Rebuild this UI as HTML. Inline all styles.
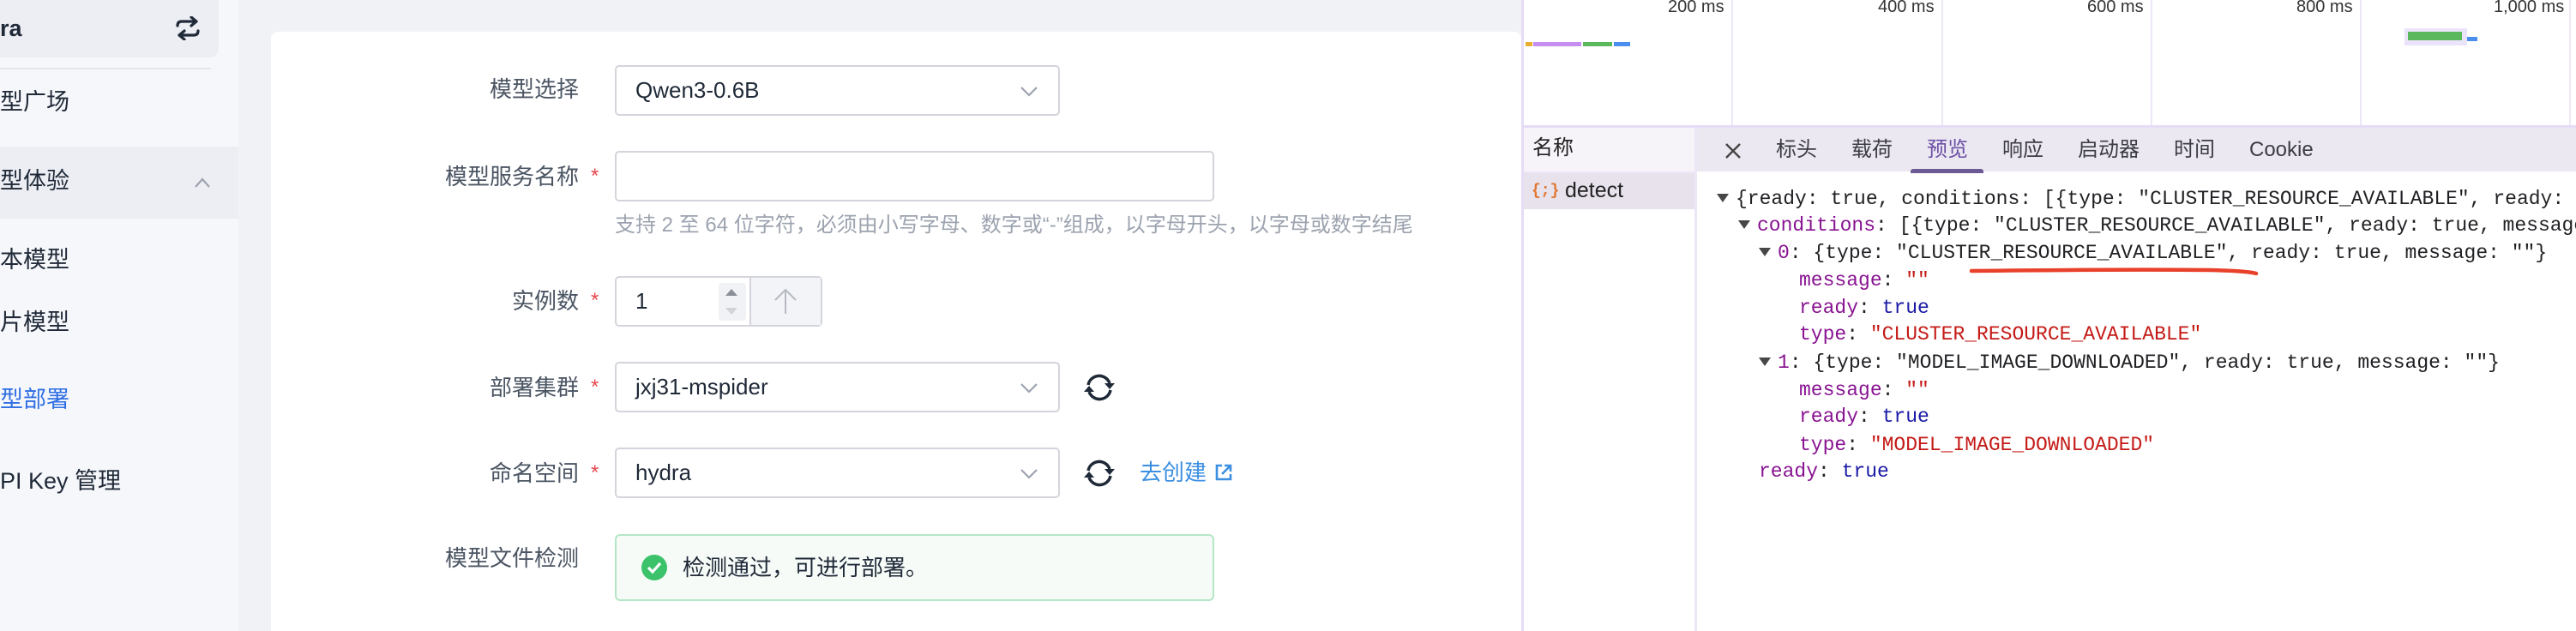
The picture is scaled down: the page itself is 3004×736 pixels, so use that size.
<!DOCTYPE html>
<html><head><meta charset="utf-8"><style>
*{margin:0;padding:0;box-sizing:border-box}
html,body{width:3004px;height:736px;overflow:hidden}
body{background:#f1f2f6;font-family:"Liberation Sans","Noto Sans CJK SC",sans-serif;position:relative;color:#1f2937}
.a{position:absolute}
.side{left:0;top:0;width:278px;height:736px;background:#f6f7fb}
.mi{position:absolute;left:0;font-size:27px;color:#1f2937;white-space:nowrap;line-height:36px}
.card{left:316px;top:37px;width:1458px;height:699px;background:#fff;border-radius:8px 8px 0 0}
.lbl{position:absolute;right:2329px;font-size:26px;color:#4b5563;line-height:36px;white-space:nowrap}
.star{position:absolute;left:689px;color:#e5484d;font-size:24px;line-height:36px}
.inp{position:absolute;left:717px;height:59px;border:2px solid #d4d4dc;border-radius:5px;background:#fff;font-size:26px;color:#1f2937;padding-left:22px;line-height:55px}
.chev{position:absolute;right:22px;top:16px}
.dt{left:1774px;top:0;width:1230px;height:736px;background:#fff;border-left:3px solid #e6dcf7;overflow:hidden}
.mono{font-family:"Liberation Mono","DejaVu Sans Mono",monospace;font-size:23px;white-space:nowrap;position:absolute;line-height:32px;color:#202124}
.k{color:#881391}.s{color:#c41a16}.b{color:#1a1aa6}
.tri{display:inline-block;width:0;height:0;border-left:7px solid transparent;border-right:7px solid transparent;border-top:10px solid #474747;margin-right:8px;vertical-align:2px}
.tab{position:absolute;top:160px;font-size:24px;color:#3c3c43;line-height:30px}
.ms{position:absolute;top:0;font-size:20px;color:#333;line-height:16px}
.gl{position:absolute;top:0;width:2px;height:147px;background:#ece6f6}
</style></head><body>
<div class="a side">
  <div class="a" style="left:0;top:0;width:255px;height:67px;background:#eceef4;border-radius:0 0 10px 0"></div>
  <div class="mi" style="top:15px;font-weight:bold">ra</div>
  <svg class="a" style="left:203px;top:19px" width="32" height="28" viewBox="0 0 32 28"><path d="M4 11 Q4 6 9 6 H26 M20 1 L26 6 L20 11 M28 17 Q28 22 23 22 H6 M12 27 L6 22 L12 17" fill="none" stroke="#1f2937" stroke-width="3.2" stroke-linecap="round" stroke-linejoin="round"/></svg>
  <div class="a" style="left:0;top:79px;width:246px;height:2px;background:#e4e6ec"></div>
  <div class="mi" style="top:101px">型广场</div>
  <div class="a" style="left:0;top:171px;width:278px;height:84px;background:#eceef4"></div>
  <div class="mi" style="top:193px">型体验</div>
  <svg class="a" style="left:226px;top:206px" width="20" height="14"><path d="M2 12 L10 3 L18 12" fill="none" stroke="#9ca3af" stroke-width="2.2"/></svg>
  <div class="mi" style="top:285px">本模型</div>
  <div class="mi" style="top:358px">片模型</div>
  <div class="mi" style="top:448px;color:#2f6fe4">型部署</div>
  <div class="mi" style="top:543px">PI Key 管理</div>
</div>
<div class="a card"></div>

<div class="lbl" style="top:86px">模型选择</div>
<div class="inp" style="top:76px;width:519px">Qwen3-0.6B<svg class="chev" width="24" height="24"><path d="M3 8 L12 17 L21 8" fill="none" stroke="#9ca3af" stroke-width="2.2"/></svg></div>

<div class="lbl" style="top:188px">模型服务名称</div><div class="star" style="top:188px">*</div>
<div class="inp" style="top:176px;width:699px"></div>
<div class="a" style="left:717px;top:247px;font-size:24px;color:#9ca3af;white-space:nowrap;line-height:32px">支持 2 至 64 位字符，必须由小写字母、数字或“-”组成，以字母开头，以字母或数字结尾</div>

<div class="lbl" style="top:333px">实例数</div><div class="star" style="top:333px">*</div>
<div class="inp" style="top:322px;width:242px;padding-left:0">
  <span style="position:absolute;left:22px;top:0">1</span>
  <div class="a" style="left:119px;top:6px;width:32px;height:44px;background:#f1f2f5;border-radius:4px"></div>
  <div class="a" style="left:127px;top:13px;border-left:7px solid transparent;border-right:7px solid transparent;border-bottom:8px solid #8b8f98"></div>
  <div class="a" style="left:127px;top:35px;border-left:7px solid transparent;border-right:7px solid transparent;border-top:8px solid #d1d3d8"></div>
  <div class="a" style="left:155px;top:0;width:83px;height:55px;background:#f3f4f7;border-left:2px solid #d4d4dc"></div>
  <svg class="a" style="left:183px;top:12px" width="28" height="32"><path d="M2 14 L14 2 L26 14 M14 2 V30" fill="none" stroke="#b6bac2" stroke-width="2"/></svg>
</div>

<div class="lbl" style="top:434px">部署集群</div><div class="star" style="top:434px">*</div>
<div class="inp" style="top:422px;width:519px">jxj31-mspider<svg class="chev" width="24" height="24"><path d="M3 8 L12 17 L21 8" fill="none" stroke="#9ca3af" stroke-width="2.2"/></svg></div>
<svg class="a" style="left:1263px;top:434px" width="38" height="36" viewBox="0 0 38 36"><path d="M6 15 A13 13 0 0 1 31 13 M32 21 A13 13 0 0 1 7 23" fill="none" stroke="#1f2937" stroke-width="3.5"/><path d="M25 13 L37 13 L31 20 Z M1 23 L13 23 L7 16 Z" fill="#1f2937"/></svg>

<div class="lbl" style="top:534px">命名空间</div><div class="star" style="top:534px">*</div>
<div class="inp" style="top:522px;width:519px">hydra<svg class="chev" width="24" height="24"><path d="M3 8 L12 17 L21 8" fill="none" stroke="#9ca3af" stroke-width="2.2"/></svg></div>
<svg class="a" style="left:1263px;top:534px" width="38" height="36" viewBox="0 0 38 36"><path d="M6 15 A13 13 0 0 1 31 13 M32 21 A13 13 0 0 1 7 23" fill="none" stroke="#1f2937" stroke-width="3.5"/><path d="M25 13 L37 13 L31 20 Z M1 23 L13 23 L7 16 Z" fill="#1f2937"/></svg>
<div class="a" style="left:1329px;top:533px;font-size:26px;color:#3b8fe0;line-height:36px">去创建</div>
<svg class="a" style="left:1416px;top:540px" width="22" height="22"><path d="M9 3 H3 V19 H19 V13 M12 3 H19 V10 M19 3 L9 13" fill="none" stroke="#3b8fe0" stroke-width="2.6"/></svg>

<div class="lbl" style="top:633px">模型文件检测</div>
<div class="a" style="left:717px;top:623px;width:699px;height:78px;background:#f6fbf8;border:2px solid #b5e6c6;border-radius:6px"></div>
<svg class="a" style="left:748px;top:647px" width="30" height="30"><circle cx="15" cy="15" r="15" fill="#3cc26a"/><path d="M8 15 L13 20 L22 10" fill="none" stroke="#fff" stroke-width="3.2"/></svg>
<div class="a" style="left:796px;top:644px;font-size:26px;color:#1f2937;line-height:36px">检测通过，可进行部署。</div>

<div class="a dt">
  <div class="gl" style="left:242px"></div><div class="gl" style="left:487px"></div><div class="gl" style="left:731px"></div><div class="gl" style="left:975px"></div><div class="gl" style="left:1219px"></div>
  <div class="ms" style="left:168px">200 ms</div><div class="ms" style="left:413px">400 ms</div><div class="ms" style="left:657px">600 ms</div><div class="ms" style="left:901px">800 ms</div><div class="ms" style="left:1131px">1,000 ms</div>
  <div class="a" style="left:2px;top:49px;width:8px;height:5px;background:#e8b030"></div>
  <div class="a" style="left:11px;top:49px;width:56px;height:5px;background:#c68ef0"></div>
  <div class="a" style="left:69px;top:49px;width:34px;height:5px;background:#5cb85c"></div>
  <div class="a" style="left:105px;top:49px;width:19px;height:5px;background:#4a8ef0"></div>
  <div class="a" style="left:1027px;top:33px;width:73px;height:20px;background:#ebe3fa"></div>
  <div class="a" style="left:1031px;top:37px;width:63px;height:10px;background:#5cb85c"></div>
  <div class="a" style="left:1100px;top:43px;width:12px;height:5px;background:#4a8ef0"></div>
  <div class="a" style="left:-3px;top:146px;width:1233px;height:3px;background:#e6dcf7"></div>
  <div class="a" style="left:0;top:149px;width:199px;height:51px;background:#f6f3f9"></div>
  <div class="a" style="left:202px;top:149px;width:1028px;height:51px;background:#ece8f1"></div>
  <div class="a" style="left:199px;top:149px;width:3px;height:587px;background:#ece6f6"></div>
  <div class="a" style="left:0;top:200px;width:199px;height:2px;background:#ece6f6"></div>
  <div class="a" style="left:0;top:202px;width:199px;height:42px;background:#e7e2ec"></div>
  <div class="a" style="left:10px;top:158px;font-size:24px;color:#222;line-height:30px">名称</div>
  <div class="a" style="left:9px;top:206px;font-size:18px;color:#e2742e;font-family:'Liberation Mono',monospace;line-height:34px;font-weight:bold">{;}</div>
  <div class="a" style="left:48px;top:205px;font-size:25px;color:#222;line-height:34px">detect</div>
  <svg class="a" style="left:234px;top:166px" width="20" height="20"><path d="M2 2 L18 18 M18 2 L2 18" stroke="#444" stroke-width="2.4"/></svg>
  <div class="tab" style="left:294px">标头</div><div class="tab" style="left:382px">载荷</div>
  <div class="tab" style="left:470px;color:#6b4fa6">预览</div>
  <div class="a" style="left:451px;top:197px;width:85px;height:5px;background:#6b5b95;border-radius:3px 3px 0 0"></div>
  <div class="tab" style="left:558px">响应</div><div class="tab" style="left:646px">启动器</div><div class="tab" style="left:758px">时间</div><div class="tab" style="left:846px">Cookie</div>
  <div class="mono" style="left:225px;top:216px"><span class="tri"></span>{ready: true, conditions: [{type: "CLUSTER_RESOURCE_AVAILABLE", ready: true,</div>
  <div class="mono" style="left:250px;top:247px"><span class="tri"></span><span class="k">conditions</span>: [{type: "CLUSTER_RESOURCE_AVAILABLE", ready: true, message: ""},…]</div>
  <div class="mono" style="left:274px;top:279px"><span class="tri"></span><span class="k">0</span>: {type: "CLUSTER_RESOURCE_AVAILABLE", ready: true, message: ""}</div>
  <div class="mono" style="left:321px;top:311px"><span class="k">message</span>: <span class="s">""</span></div>
  <div class="mono" style="left:321px;top:343px"><span class="k">ready</span>: <span class="b">true</span></div>
  <div class="mono" style="left:321px;top:374px"><span class="k">type</span>: <span class="s">"CLUSTER_RESOURCE_AVAILABLE"</span></div>
  <div class="mono" style="left:274px;top:407px"><span class="tri"></span><span class="k">1</span>: {type: "MODEL_IMAGE_DOWNLOADED", ready: true, message: ""}</div>
  <div class="mono" style="left:321px;top:439px"><span class="k">message</span>: <span class="s">""</span></div>
  <div class="mono" style="left:321px;top:470px"><span class="k">ready</span>: <span class="b">true</span></div>
  <div class="mono" style="left:321px;top:503px"><span class="k">type</span>: <span class="s">"MODEL_IMAGE_DOWNLOADED"</span></div>
  <div class="mono" style="left:274px;top:534px"><span class="k">ready</span>: <span class="b">true</span></div>
  <svg class="a" style="left:519px;top:310px" width="340" height="16"><path d="M3 6 Q180 4 280 5 Q325 6 335 9" fill="none" stroke="#e8402a" stroke-width="4.5" stroke-linecap="round"/></svg>
</div>
</body></html>
